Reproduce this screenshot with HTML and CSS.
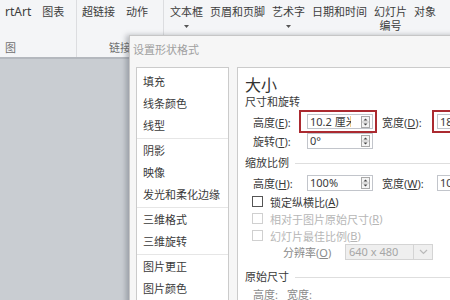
FILE: index.html
```html
<!DOCTYPE html>
<html lang="zh-CN">
<head>
<meta charset="utf-8">
<title>设置形状格式</title>
<link rel="stylesheet" href="styles.css">
</head>
<body>
<div class="app">
  <div class="ribbon">
    <div class="group g1">
      <div class="cmds">
        <div class="cmd">rtArt</div>
        <div class="cmd">图表</div>
      </div>
      <div class="glabel">图</div>
    </div>
    <div class="group g2">
      <div class="cmds">
        <div class="cmd">超链接</div>
        <div class="cmd">动作</div>
      </div>
      <div class="glabel">链接</div>
    </div>
    <div class="group g3">
      <div class="cmds">
        <div class="cmd">文本框<svg class="dd" width="5" height="3" viewBox="0 0 5 3"><path d="M0 0H5L2.5 3Z" fill="#555"/></svg></div>
        <div class="cmd">页眉和页脚</div>
        <div class="cmd">艺术字<svg class="dd" width="5" height="3" viewBox="0 0 5 3"><path d="M0 0H5L2.5 3Z" fill="#555"/></svg></div>
        <div class="cmd">日期和时间</div>
        <div class="cmd">幻灯片<span>编号</span></div>
        <div class="cmd">对象</div>
      </div>
    </div>
  </div>
  <div class="workspace"></div>
</div>

<div class="dialog">
  <div class="dtitle">设置形状格式</div>
  <div class="dbody">
    <div class="nav">
      <div class="item">填充</div>
      <div class="item">线条颜色</div>
      <div class="item">线型</div>
      <div class="sep"></div>
      <div class="item">阴影</div>
      <div class="item">映像</div>
      <div class="item">发光和柔化边缘</div>
      <div class="sep"></div>
      <div class="item">三维格式</div>
      <div class="item">三维旋转</div>
      <div class="sep"></div>
      <div class="item">图片更正</div>
      <div class="item">图片颜色</div>
    </div>
    <div class="pane">
      <div class="big">大小</div>
      <div class="sub">尺寸和旋转</div>
      <div class="row r1">
        <span class="lbl w46">高度(<u>E</u>):</span>
        <span class="mark m1"><span class="inp"><span class="val clip">10.2 厘米</span><svg class="spin" width="9" height="12" viewBox="0 0 9 12"><rect x="0.5" y="0.5" width="8" height="11" fill="#f4f4f4" stroke="#a9a9a9"/><line x1="1" y1="6" x2="8" y2="6" stroke="#c4c4c4"/><path d="M2.5 4.5H6.5L4.5 2.5Z" fill="#444"/><path d="M2.5 7.5H6.5L4.5 9.5Z" fill="#444"/></svg></span></span>
        <span class="lbl w50 ml5">宽度(<u>D</u>):</span>
        <span class="mark m2"><span class="inp"><span class="val">18.1 厘米</span></span></span>
      </div>
      <div class="row r2">
        <span class="lbl w54">旋转(<u>T</u>):</span>
        <span class="inp"><span class="val">0°</span><svg class="spin" width="9" height="12" viewBox="0 0 9 12"><rect x="0.5" y="0.5" width="8" height="11" fill="#f4f4f4" stroke="#a9a9a9"/><line x1="1" y1="6" x2="8" y2="6" stroke="#c4c4c4"/><path d="M2.5 4.5H6.5L4.5 2.5Z" fill="#444"/><path d="M2.5 7.5H6.5L4.5 9.5Z" fill="#444"/></svg></span>
      </div>
      <div class="sec s1">缩放比例</div>
      <div class="row r3">
        <span class="lbl w54">高度(<u>H</u>):</span>
        <span class="inp"><span class="val">100%</span><svg class="spin" width="9" height="12" viewBox="0 0 9 12"><rect x="0.5" y="0.5" width="8" height="11" fill="#f4f4f4" stroke="#a9a9a9"/><line x1="1" y1="6" x2="8" y2="6" stroke="#c4c4c4"/><path d="M2.5 4.5H6.5L4.5 2.5Z" fill="#444"/><path d="M2.5 7.5H6.5L4.5 9.5Z" fill="#444"/></svg></span>
        <span class="lbl w55 ml9">宽度(<u>W</u>):</span>
        <span class="inp"><span class="val">100%</span></span>
      </div>
      <div class="chk first"><span class="box"></span>锁定纵横比(<u>A</u>)</div>
      <div class="chk dis"><span class="box"></span>相对于图片原始尺寸(<u>R</u>)</div>
      <div class="chk dis"><span class="box"></span>幻灯片最佳比例(<u>B</u>)</div>
      <div class="res">
        <span class="lbl w62 dtext">分辨率(<u>O</u>)</span>
        <span class="combo"><span class="ctext">640 x 480</span><span class="cbtn"><svg width="9" height="6" viewBox="0 0 9 6"><path d="M1 1L4.5 4.5L8 1" fill="none" stroke="#b9b9b9" stroke-width="1.2"/></svg></span></span>
      </div>
      <div class="sec s2">原始尺寸</div>
      <div class="orig"><span>高度:</span><span>宽度:</span></div>
    </div>
  </div>
</div>
</body>
</html>
```

FILE: styles.css
```css
* { box-sizing: border-box; margin: 0; padding: 0; }
html, body { width: 450px; height: 300px; overflow: hidden; }
body {
  font-family: "Noto Sans", "Noto Sans CJK SC", sans-serif;
  font-size: 11px;
  color: #3a3a3a;
  background: #c9cdd2;
  position: relative;
}
u { text-decoration: underline; text-underline-offset: 1px; }

.app { display: flex; flex-direction: column; height: 300px; }

.ribbon { height: 57px; flex: none; display: flex; background: #f4f5f7; }
.group {
  display: flex; flex-direction: column; justify-content: space-between;
  border-right: 1px solid #dcdde0;
  padding: 5px 0 2px;
}
.g1 { width: 77px; padding-left: 5px; }
.g2 { width: 87px; padding-left: 5px; }
.g3 { flex: 1; padding-left: 6px; border-right: none; }
.cmds { display: flex; align-items: flex-start; }
.g1 .cmds { gap: 11px; }
.g2 .cmds { gap: 11px; }
.g3 .cmds { gap: 7px; }
.cmd {
  display: flex; flex-direction: column; align-items: center;
  line-height: 14px; white-space: nowrap; color: #3d3d3d;
}
.g1 .cmd:first-child { font-size: 12px; }
.cmd .dd { margin-top: 6px; }
.glabel { line-height: 14px; color: #707070; }
.g2 .glabel { text-align: center; padding-right: 5px; }

.workspace { flex: 1; border-top: 2px solid #b4b8be; background: #c9cdd2; }

.dialog {
  position: absolute; left: 129px; top: 35px;
  width: 340px; height: 280px;
  background: #f6f6f6;
  border: 1px solid #c6c6c6;
  box-shadow: -3px 0 5px rgba(70, 75, 85, 0.35);
}
.dtitle { height: 31px; padding: 7px 0 0 3px; line-height: 14px; color: #a0a0a0; }
.dbody { display: flex; gap: 8px; padding-left: 6px; align-items: flex-start; }

.nav {
  width: 93px; height: 250px; flex: none;
  background: #fff; border: 1px solid #cbcbcb;
  padding-top: 3px;
}
.item { height: 22px; line-height: 22px; padding-left: 6px; white-space: nowrap; color: #3a3a3a; }
.sep { height: 1px; margin: 1px 0; background: #e6e6e6; }

.pane {
  width: 240px; height: 250px; flex: none;
  background: #fff; border: 1px solid #cbcbcb;
  color: #3a3a3a;
}
.big { font-size: 16px; line-height: 20px; margin-top: 7px; padding-left: 7px; color: #333; }
.sub { line-height: 14px; padding-left: 7px; }

.row { display: flex; align-items: center; padding-left: 15px; white-space: nowrap; }
.r1 { margin-top: 1px; }
.r3 { margin-top: 5px; }
.lbl { flex: none; white-space: nowrap; }
.w46 { width: 46px; }
.w50 { width: 50px; }
.w54 { width: 54px; }
.w55 { width: 55px; }
.w62 { width: 62px; }
.ml5 { margin-left: 5px; }
.ml9 { margin-left: 9px; }

.mark { display: flex; border: 2px solid #ab2a30; flex: none; }
.m1 { padding: 2px 2px 2px 6px; }
.m2 { padding: 2px 0 2px 3px; }

.inp {
  display: flex; align-items: center; flex: none;
  width: 66px; height: 16px;
  background: #fff; border: 1px solid #c2c5cb;
  padding-left: 2px; line-height: 14px;
}
.mark .inp { height: 15px; }
.val { white-space: nowrap; overflow: hidden; }
.clip { width: 41px; }
.spin { margin-left: auto; margin-right: 2px; flex: none; }

.sec { display: flex; align-items: center; gap: 6px; padding-left: 7px; line-height: 14px; white-space: nowrap; }
.sec::after { content: ""; flex: 1; height: 1px; background: #dedede; }
.s1 { margin-top: 7px; }
.s2 { margin-top: 10px; }

.chk { display: flex; align-items: center; height: 17px; padding-left: 14px; white-space: nowrap; }
.chk.first { margin-top: 2px; }
.box { width: 11px; height: 11px; border: 1px solid #555; background: #fff; margin-right: 7px; flex: none; }
.chk.dis { color: #b6b6b6; }
.chk.dis .box { border-color: #d0d0d0; }

.res { display: flex; align-items: center; padding-left: 45px; height: 16px; }
.dtext { color: #8a8a8a; }
.combo {
  display: flex; width: 88px; height: 16px; flex: none;
  background: #efefef; border: 1px solid #d4d4d4;
}
.ctext { flex: 1; padding-left: 3px; line-height: 14px; color: #a6a6a6; white-space: nowrap; }
.cbtn { width: 19px; border-left: 1px solid #d4d4d4; display: flex; align-items: center; justify-content: center; }

.orig { display: flex; gap: 9px; padding-left: 15px; margin-top: 4px; line-height: 14px; color: #8a8a8a; }
```
